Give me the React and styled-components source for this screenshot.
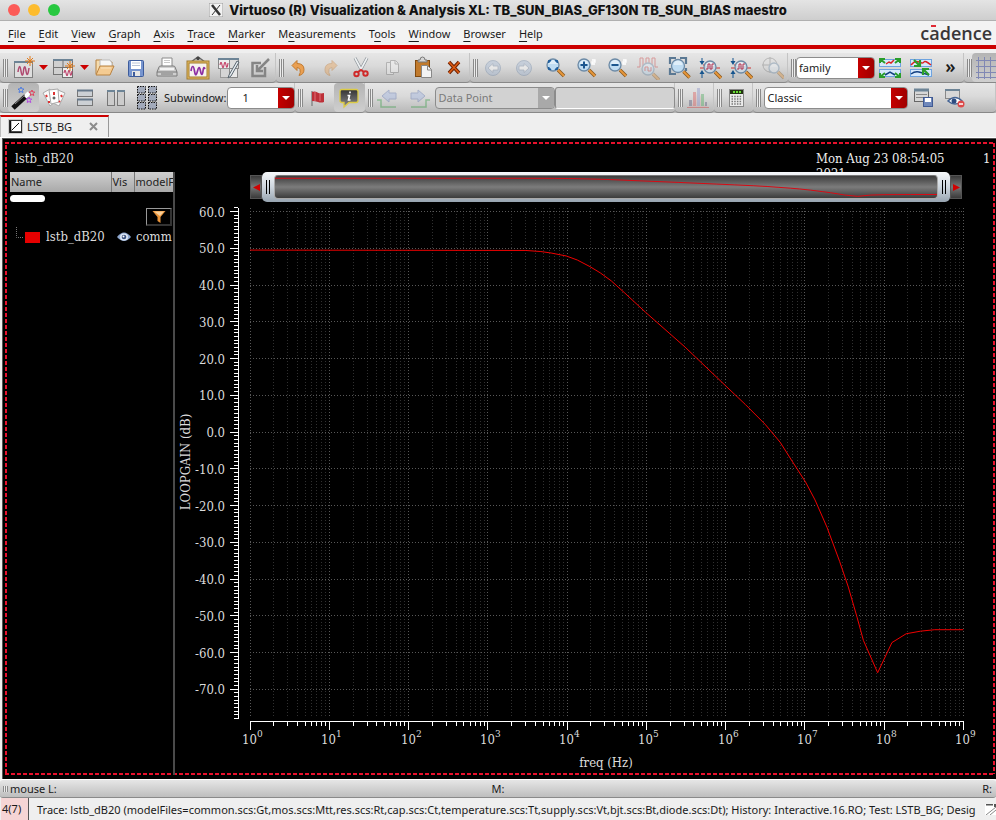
import React from "react";
import styled, { createGlobalStyle, css } from "styled-components";

const UI = `"Noto Sans", "Open Sans", sans-serif`;
const PLOT = `"DejaVu Serif Condensed", "DejaVu Serif", serif`;
const RED = "#cc0000";

const GlobalStyle = createGlobalStyle`
  *, *::before, *::after { box-sizing: border-box; }
  body { margin: 0; background: #efefef; font: 11px/15px ${UI}; color: #1a1a1a; overflow: hidden; }
  button, select, input { font: inherit; color: inherit; margin: 0; padding: 0; border: 0; background: none; }
`;

const Window = styled.div`
  display: flex;
  flex-direction: column;
  min-height: 100vh;
  width: 100%;
  background: #efefef;
`;

const TitleBar = styled.header`
  position: relative;
  display: flex;
  align-items: center;
  justify-content: center;
  gap: 6px;
  height: 21px;
  background: linear-gradient(#e4e4e4, #cecece);
  border-bottom: 1px solid #b0b0b0;
`;

const Title = styled.h1`
  margin: 0;
  font: 800 13px/20px Inter, sans-serif;
  color: #111;
  white-space: nowrap;
`;

const Lights = styled.div`
  position: absolute;
  left: 8px;
  top: 4px;
  display: flex;
  gap: 8px;
`;

const Light = styled.button`
  width: 12px;
  height: 12px;
  border-radius: 50%;
  background: ${(p) => p.$color};
`;

const MenuBar = styled.nav`
  display: flex;
  align-items: center;
  gap: 1px;
  height: 24px;
  padding: 0 4px 0 2px;
  background: #f3f3f3;
`;

const MenuItem = styled.button`
  height: 20px;
  padding: 0 6px;
  white-space: nowrap;
  u { text-underline-offset: 3px; text-decoration-skip-ink: none; }
`;

const Brand = styled.div`
  position: relative;
  margin-left: auto;
  font: 600 18px/22px "Open Sans", sans-serif;
  color: #3a3638;
  &::after {
    content: "";
    position: absolute;
    left: 11px;
    top: 3px;
    width: 5px;
    height: 2px;
    background: #e02b35;
  }
`;

const RedRule = styled.div`
  height: 4px;
  background: ${RED};
`;

const ToolRow = styled.div`
  display: flex;
  height: 30px;
  margin-top: ${(p) => (p.$first ? 4 : 0)}px;
  overflow: hidden;
  background: #b6b6b6;
`;

const Group = styled.div`
  display: flex;
  flex: ${(p) => (p.$grow ? "1 0 auto" : "none")};
  align-items: center;
  height: 30px;
  background: linear-gradient(#e6e6e6, #dadada 45%, #b9b9b9);
  border-bottom: 1px solid #888;
  border-radius: 0 0 4px 4px;
  box-shadow: inset -1px 0 0 #c4c4c4;
`;

const Grip = styled.span`
  flex: none;
  width: 5px;
  height: ${(p) => (p.$small ? 6 : 18)}px;
  margin: 0 0 0 3px;
  background: repeating-linear-gradient(90deg, #8a8a8a 0 1px, #ececec 1px 2px);
`;

const Tool = styled.button`
  display: flex;
  align-items: center;
  justify-content: center;
  flex: none;
  width: ${(p) => p.$w || 31}px;
  height: 29px;
  padding-right: ${(p) => (p.$w ? 0 : 2)}px;
  opacity: ${(p) => (p.disabled ? 0.4 : 1)};
  ${(p) =>
    p.$pressed &&
    css`
      background: linear-gradient(#b4b4b4, #cfcfcf);
      border-radius: 4px;
    `}
`;

const Caption = styled.label`
  padding: 0 1px;
`;

const Combo = styled.span`
  display: grid;
  flex: none;
  width: ${(p) => p.$w}px;
  height: 22px;
  margin-left: ${(p) => p.$lead || 0}px;
  border: 1px solid #8c8c8c;
  border-radius: 4px;
  overflow: hidden;
  background: ${(p) => (p.$off ? "#d2d2d2" : "#fff")};
  color: ${(p) => (p.$off ? "#7a7a7a" : "#222")};
  select, svg { grid-area: 1 / 1; }
  select {
    appearance: none;
    width: 100%;
    padding: 0 18px 0 ${(p) => p.$indent || 2}px;
    opacity: 1;
  }
  svg {
    justify-self: end;
    pointer-events: none;
    background: ${(p) => (p.$off ? "#a9a9a9" : "linear-gradient(90deg, #c40000, #a00000)")};
  }
`;

const Field = styled.input`
  && {
    width: 120px;
    height: 22px;
    border: 1px solid #8c8c8c;
    border-bottom-color: #fff;
    border-radius: 3px;
    background: #d2d2d2;
  }
`;

const Chevron = styled.span`
  font: 600 18px/18px ${UI};
  padding-bottom: 4px;
`;

const TabStrip = styled.div`
  display: flex;
  height: 25px;
  padding-top: 2px;
  border-bottom: 1px solid #fff;
`;

const Tab = styled.div`
  display: flex;
  align-items: center;
  width: 109px;
  padding: 0 10px 2px 7px;
  gap: 4px;
  border-top: 2px solid ${RED};
  border-right: 1px solid #999;
  border-left: 1px solid #bbb;
`;

const TabPicture = styled.span`
  display: flex;
  padding: 1px;
  background: #ccc;
`;

const CloseTab = styled.button`
  display: flex;
  margin-left: auto;
`;

const dashX = "repeating-linear-gradient(90deg, #e8112d 0 4px, transparent 4px 6px)";
const dashY = "repeating-linear-gradient(#e8112d 0 4px, transparent 4px 6px)";

const Canvas = styled.main`
  display: flex;
  flex-direction: column;
  flex: 1;
  margin-left: 2px;
  padding: 4px 4px 4px 7px;
  border-top: 1px solid #555;
  border-left: 1px solid #555;
  background:
    ${dashX} 2px 3px / calc(100% - 3px) 2px no-repeat,
    ${dashX} 2px calc(100% - 4px) / calc(100% - 3px) 2px no-repeat,
    ${dashY} 2px 6px / 2px calc(100% - 12px) no-repeat,
    ${dashY} calc(100% - 1px) 4px / 2px calc(100% - 9px) no-repeat,
    #000;
  color: #dcdcdc;
  font: 13px/16px ${PLOT};
`;

const GraphHeader = styled.div`
  display: flex;
  justify-content: space-between;
  height: 29px;
  padding: 8px 0 0 5px;
`;

const Stamp = styled.div`
  display: flex;
  height: 21px;
  overflow: hidden;
  color: #eee;
  time { width: 140px; line-height: 15px; }
  span { width: 9px; margin-left: 27px; }
`;

const Body = styled.div`
  display: flex;
  flex: 1;
`;

const Side = styled.aside`
  flex: none;
  width: 165px;
  overflow: hidden;
  border-right: 2px solid #4a4a4a;
`;

const Tree = styled.table`
  width: 163px;
  table-layout: fixed;
  border-collapse: collapse;
  white-space: nowrap;
  th, td { padding: 0; overflow: hidden; text-align: left; font-weight: normal; vertical-align: middle; }
  th {
    height: 20px;
    padding: 0 0 1px 1px;
    font: 11px/15px ${UI};
    color: #222;
    background: linear-gradient(#cfcfcf, #a9a9a9);
  }
  th + th { border-left: 1px solid #777; }
  td { height: 20px; }
  td:last-child { padding-left: ${(p) => p.$inset}px; }
  td[colspan] { padding-left: 0; }
`;

const Progress = styled.div`
  width: 35px;
  height: 7px;
  margin-top: 3px;
  border-radius: 4px;
  background: #fff;
`;

const FilterButton = styled.button`
  display: flex;
  align-items: center;
  justify-content: center;
  width: 26px;
  height: 18px;
  margin: 6px 1px 1px auto;
  border: 1px solid #999;
  border-right: 2px solid #333;
  border-bottom: 2px solid #333;
`;

const TraceName = styled.span`
  display: flex;
  align-items: center;
  gap: 6px;
`;

const Visible = styled.span`
  display: flex;
  padding-left: 6px;
`;

const PlotArea = styled.section`
  display: flex;
  flex: 1;
  flex-direction: column;
  min-width: 0;
  padding-left: 1px;
`;

const Zoomer = styled.div`
  display: flex;
  align-items: center;
  height: 30px;
  margin: 0 30px 3px 74px;
`;

const ZoomEnd = styled.button`
  display: flex;
  align-items: center;
  justify-content: center;
  width: 12px;
  height: 24px;
  border: 1px solid #555;
  background: linear-gradient(#3a3a3a, #777, #3a3a3a);
`;

const ZoomRange = styled.div`
  display: flex;
  flex: 1;
  align-items: center;
  height: 30px;
  padding: 3px 0;
  border-radius: 5px;
  background: linear-gradient(#f7f9fb, #ced6de 50%, #97a4b0);
`;

const ZoomHandle = styled.button`
  display: flex;
  align-items: center;
  justify-content: center;
  width: 12px;
  height: 24px;
  &::before {
    content: "";
    width: 4px;
    height: 14px;
    border: solid #000;
    border-width: 0 1px;
  }
`;

const ZoomTrack = styled.div`
  flex: 1;
  height: 24px;
  border: 1px solid #aaa;
  border-top-color: #777;
  border-radius: 4px;
  background: linear-gradient(#3c3c3c, #7c7c7c 50%, #3c3c3c);
  svg { display: block; width: 100%; height: 22px; }
`;

const Chart = styled.svg`
  display: block;
  width: 100%;
  font: 13px ${PLOT};
  fill: #dcdcdc;
`;

const MouseBar = styled.div`
  display: grid;
  grid-template-columns: 1fr auto 1fr;
  align-items: center;
  height: 19px;
  border-top: 1px solid #fff;
  border-bottom: 1px solid #8a8a8a;
  border-radius: 3px;
  background: linear-gradient(#e6e6e6, #bebebe);
  span:first-child { display: flex; align-items: center; gap: 2px; }
  span:last-child { justify-self: end; padding-right: 4px; }
`;

const StatusBar = styled.footer`
  display: flex;
  align-items: center;
  height: 22px;
  white-space: nowrap;
`;

const Badge = styled.span`
  align-self: stretch;
  width: 28px;
  margin-left: 1px;
  padding-left: 1px;
  line-height: 22px;
  background: #f6d5d5;
  border-right: 1px solid #555;
`;

const StatusText = styled.span`
  flex: 1;
  padding-left: 8px;
  overflow: hidden;
`;

const Svg = ({ s = 24, children, ...rest }) => (
  <svg width={s} height={s} viewBox={`0 0 ${s} ${s}`} fill="none" aria-hidden="true" {...rest}>
    {children}
  </svg>
);

const Drop = ({ fill = RED }) => (
  <svg width="9" height="5" viewBox="0 0 9 5" aria-hidden="true"><path d="M0 0h9L4.500 5z" fill={fill} /></svg>
);

const Lens = ({ x = 10, y = 9, r = 6, tint = "#bfdcf2" }) => (
  <g>
    <path d={`M${x + r - 1} ${y + r - 1}l6 6`} stroke="#8a5a20" strokeWidth="3.500" />
    <path d={`M${x + r - 1} ${y + r - 1}l6 6`} stroke="#e8973a" strokeWidth="1.800" />
    <circle cx={x} cy={y} r={r} fill={tint} stroke="#6c8aa6" strokeWidth="1.300" />
    <path d={`M${x - r + 2} ${y - 1}a${r - 2} ${r - 2} 0 0 1 ${2 * r - 4} 0`} fill="#fff" opacity=".5" />
  </g>
);

const Spark = ({ x, y, c = "#e07b1a" }) => (
  <path d={`M${x} ${y - 5}v10M${x - 5} ${y}h10M${x - 3} ${y - 3}l6 6M${x - 3} ${y + 3}l6-6`} stroke={c} strokeWidth="1" />
);

const NewPlot = () => (
  <Svg>
    <rect x="3.500" y="5.500" width="18" height="16" fill="#dedede" stroke="#808080" />
    <path d="M3 6h19" stroke="#6d8496" strokeWidth="2" />
    <path d="M7 16c1-7 2-7 3-1s2 5 2.500 0 1.500-6 2.500 0 2 4 3-3" stroke="#b04a70" strokeWidth="1.500" />
    <Spark x={19} y={5} />
  </Svg>
);
const NewSub = () => (
  <Svg>
    <rect x="1.500" y="3.500" width="19" height="15" fill="#d0d0d0" stroke="#757575" />
    <path d="M1 4h20" stroke="#6d8496" strokeWidth="2" />
    <path d="M11 4v14M1 11.500h20" stroke="#757575" />
    <rect x="10.500" y="11.500" width="10" height="10" fill="#eee" stroke="#707070" />
    <path d="M12 17q1-6 2 0t2 0t2 0t2-2" stroke="#b8325e" />
    <Spark x={18} y={10} />
  </Svg>
);
const Folder = () => (
  <Svg>
    <path d="M3 18V4h6l2 2h8v4" fill="#f5dcae" stroke="#b5803f" />
    <path d="M7 4h10l2 3v5H7z" fill="#f7f7f7" stroke="#bbb" />
    <path d="M3 19 7 10h14l-4 9z" fill="#f4cb92" stroke="#b98241" />
    <path d="M8 12h10" stroke="#fbe2bd" />
  </Svg>
);
const Save = () => (
  <Svg>
    <rect x="4.500" y="4.500" width="15" height="16" rx="1" fill="#7795cf" stroke="#3d5c9c" />
    <rect x="7" y="5" width="10" height="8" fill="#fff" />
    <path d="M8 7h8M8 9.500h8" stroke="#b9c4d8" />
    <rect x="8" y="15" width="8" height="5" fill="#e6e6e6" /><rect x="9" y="16" width="2" height="4" fill="#3d5c9c" />
  </Svg>
);
const Print = () => (
  <Svg>
    <path d="M7 10V2h10v8" fill="#fff" stroke="#8a8a8a" />
    <path d="M4 11q0-1 2-1h12q2 0 2 1l2 5v4H2v-4z" fill="#cfcfcf" stroke="#7b7b7b" />
    <path d="M2 16h20M6 18h12" stroke="#777" /><path d="M5 13h14" stroke="#f4f4f4" strokeWidth="2" />
    <path d="M9 4.500h6M9 6.500h6" stroke="#c9c9c9" />
  </Svg>
);
const Picture = () => (
  <Svg>
    <path d="M5 6 12 1l7 5" stroke="#666" strokeWidth="1.500" /><circle cx="12" cy="2.500" r="1.800" fill="#444" />
    <rect x="2" y="6" width="20" height="16" fill="#f7f3ee" stroke="#a07a30" strokeWidth="3" />
    <rect x="2" y="6" width="20" height="16" stroke="#e5bd63" />
    <path d="M5 15c1-6 2.500-6 3.500 0s2 4 3 0 2-5 3 0 2 4 2.500 0 1-4 2-2" stroke="#8d2fa3" strokeWidth="1.700" />
  </Svg>
);
const EditPlot = () => (
  <Svg>
    <rect x="1.500" y="2.500" width="11" height="10" fill="#eee" stroke="#888" />
    <rect x="12.500" y="2.500" width="9" height="10" fill="#dedede" stroke="#888" />
    <rect x="3.500" y="12.500" width="9" height="9" fill="#d5d5d5" stroke="#999" />
    <rect x="12.500" y="12.500" width="8" height="9" fill="#e9e9e9" stroke="#888" />
    <path d="M1 3h21" stroke="#6d8496" strokeWidth="2" />
    <path d="M3 9q1-6 2 0t2 0t2 0t2-2" stroke="#c0305a" />
    <path d="m20 5-8 14-1 3 3-2 8-14z" fill="#e8eef2" stroke="#5a6670" />
  </Svg>
);
const Import = () => (
  <Svg>
    <path d="M13 7H4.500v13H17v-9" stroke="#858585" strokeWidth="2.500" />
    <path d="M21 3 10 14M9 9v6h6" stroke="#858585" strokeWidth="2.500" />
  </Svg>
);
const Undo = ({ flip }) => (
  <Svg>
    <path transform={flip ? "translate(24 0) scale(-1 1)" : undefined} d="M5 9.500 10 4.500v3q7 0 7 6 0 5-5 6 2-3 1-6-1-2-3-2v3z" fill="#eaa052" stroke="#c27a30" />
  </Svg>
);
const Cut = () => (
  <Svg>
    <path d="m6 2 7 13M18 2l-7 13" stroke="#8d9499" strokeWidth="3" /><path d="m6 2 7 13M18 2l-7 13" stroke="#eef1f3" strokeWidth="1.600" />
    <circle cx="7.500" cy="18" r="2.200" stroke="#cf2a2a" strokeWidth="2" /><circle cx="16.500" cy="17.500" r="2.200" stroke="#cf2a2a" strokeWidth="2" />
    <path d="m9 16 3-2 3 2" stroke="#cf2a2a" strokeWidth="2" />
  </Svg>
);
const Copy = () => (
  <Svg>
    <path d="M6.500 6.500h7v12h-7z" fill="#eee" stroke="#777" /><path d="M10.500 4.500h5l3 3v9h-8z" fill="#fafafa" stroke="#777" /><path d="M15 5v3h3" stroke="#777" />
  </Svg>
);
const Paste = () => (
  <Svg>
    <rect x="4.500" y="4.500" width="14" height="16" fill="#c17a2c" stroke="#80490f" /><path d="M7 6h9V4h-2q0-3-2.500-3T9 4H7z" fill="#d5d5d5" stroke="#777" />
    <path d="M10.500 9.500h6l4 4v8h-10z" fill="#f3f3f3" stroke="#888" /><path d="M16.500 10v4h4" stroke="#888" />
  </Svg>
);
const Delete = () => (
  <Svg><path d="m7 6 10 11M17 6 7 17" stroke="#6e2305" strokeWidth="3.500" /><path d="m7 6 10 11M17 6 7 17" stroke="#dd5a12" strokeWidth="1.600" /></Svg>
);
const Nav = ({ flip }) => (
  <Svg>
    <g transform={flip ? "translate(24 0) scale(-1 1)" : undefined}>
      <circle cx="12" cy="12" r="7.500" fill="#a4b9d6" stroke="#6f87a8" />
      <path d="m7 12 5-4.500V10h5v4h-5v2.500z" fill="#fff" stroke="#6a7f9d" strokeWidth=".8" />
    </g>
  </Svg>
);
const Fit = () => <Svg><Lens /><path d="M5.500 7V4.500H8zM14.500 7V4.500H12zM5.500 11v2.500H8zM14.500 11v2.500H12z" fill="#1f5e9c" stroke="#1f5e9c" /></Svg>;
const ZoomBy = ({ plus }) => (
  <Svg>
    <Lens /><path d={plus ? "M6.500 9h7M10 5.500v7" : "M6.500 9h7"} stroke="#1b568f" strokeWidth="2" />
    <path d="M18 4h3v2h-3v2h3" stroke="#fff" strokeWidth="1.300" />
  </Svg>
);
const ZoomWave = () => (
  <Svg>
    <path d="M1 11h3V2h3v9h3V2h3v9h3V2h3v9h3" stroke="#c33" /><Lens x={12} y={13} r={6} /><path d="M9 15v-4h3v4h3v-4" stroke="#c33" />
  </Svg>
);
const ZoomBox = () => (
  <Svg>
    <path d="M3 8V2h6M13 2h6v6M3 12v6h6M19 12v3" stroke="#5a7893" strokeWidth="2.200" /><Lens x={11} y={10} r={6.500} />
  </Svg>
);
const ZoomY = () => (
  <Svg>
    <path d="M2 12h4M18 12h4M5 9h13" stroke="#c33" />
    <path d="M4 2v5M4 16v6" stroke="#15548e" /><path d="M1.500 5h5L4 9zM1.500 18h5L4 14z" fill="#15548e" />
    <Lens x={12} y={11} r={6} tint="#ccd7e2" /><path d="M8 13h2V8h2v5h2V8h2" stroke="#b3304c" />
  </Svg>
);
const ZoomPolar = () => <Svg><circle cx="10" cy="9" r="7" stroke="#777" /><path d="M10 1v16M2 9h16" stroke="#777" /><Lens x={14} y={12} r={5} tint="#dfe7ee" /></Svg>;
const FitBox = ({ inward }) => (
  <Svg>
    <rect x="1.500" y="3.500" width="21" height="7" fill="#d6e9fb" stroke="#6ea3e0" /><rect x="1.500" y="13.500" width="21" height="7" fill="#d6e9fb" stroke="#6ea3e0" />
    <path d={inward ? "M2 9q4-5 8-3t5 0t7 3" : "m8 8 3-2 2 1 3-3"} stroke="#d22" strokeWidth="1.500" />
    <path d={inward ? "M2 18q4-3 8-2t10 3" : "m7 19 5-3 5 3"} stroke="#123f80" strokeWidth="1.500" />
    {inward ? (
      <path d="m5 4 5 5M11 4v6H5M20 19l-5-5M14 19v-6h6" stroke="#2a9d2a" strokeWidth="2.200" />
    ) : (
      <path d="M7 7 2 3M2 7V3h5M17 7l5-4M17 3h5v4M7 17l-5 4M2 17v4h5M17 17l5 4M17 21h5v-4" stroke="#2a9d2a" strokeWidth="2" />
    )}
  </Svg>
);
const GridIcon = () => (
  <Svg><path d="M3.500 1v22M9.500 1v22M15.500 1v22M21.500 1v22M1 4.500h22M1 10.500h22M1 16.500h22M1 21.500h22" stroke="#8088b4" /></Svg>
);
const Wand = () => (
  <Svg>
    <path d="m2 22 13-12" stroke="#111" strokeWidth="5" /><path d="m14 11 4-4" stroke="#fff" strokeWidth="4" /><path d="m4 18 10-9" stroke="#888" />
    <path d="m10 1 1 2h2l-1.500 1.500.5 2L10 5.500 8 6.500l.5-2L7 3h2z" stroke="#4c7be0" />
    <path d="m21 4 .8 2h2l-1.500 1.500.5 2-1.800-1-1.800 1 .5-2L18 6h2z" stroke="#e0405c" />
    <path d="m18 11 .8 2h2l-1.500 1.500.5 2-1.800-1-1.800 1 .5-2L15 13h2z" stroke="#b44be0" />
  </Svg>
);
const Cards = () => (
  <Svg>
    <path d="m1 7 7-4 5 13-5 4z" fill="#fafafa" stroke="#aaa" /><path d="m16 4 7 3-6 13-6-3z" fill="#fafafa" stroke="#aaa" />
    <path d="m7 4 9-1 1 13-8 2z" fill="#fff" stroke="#aaa" />
    <path d="m4 9 1 2M12 6v3M19 9l1 2M17 15l1 1M7 15v2" stroke="#d33" strokeWidth="2" /><path d="M10.500 12h3M12 10.500v3" stroke="#333" />
  </Svg>
);
const Rows = () => (
  <Svg><rect x="4.500" y="4.500" width="15" height="6" fill="#ccd0d4" stroke="#777" /><rect x="4.500" y="13.500" width="15" height="6" fill="#ccd0d4" stroke="#777" /><path d="M4 4.500h16M4 13.500h16" stroke="#66788a" strokeWidth="2" /></Svg>
);
const Cols = () => (
  <Svg><rect x="3.500" y="4.500" width="7" height="15" fill="#ccc" stroke="#777" /><rect x="13.500" y="4.500" width="7" height="15" fill="#ccc" stroke="#777" /><path d="M3 5h8M13 5h8" stroke="#6d8496" strokeWidth="2" /></Svg>
);
const GridSix = () => (
  <Svg>
    {[1, 9, 17].map((y) => [2, 13].map((x) => <rect key={`${x}-${y}`} x={x + 0.5} y={y - 0.5} width="8" height="6.500" fill="#a2aabb" stroke="#111" strokeDasharray="1.500 1" />))}
  </Svg>
);
const Flag = () => (
  <Svg><path d="M6 5v15" stroke="#888" strokeWidth="1.500" /><path d="M6 6q3-1 5.500.5t6.500.5v9q-3 1-6 0T6 15z" fill="#bd3038" /><path d="M9 6v9M14 7v8" stroke="#e07078" /></Svg>
);
const Info = () => (
  <Svg>
    <path d="M5 3.500h14q2 0 2 2v9q0 2-2 2h-7L7 21v-4.500H5q-2 0-2-2v-9q0-2 2-2z" fill="url(#bubble)" stroke="#dccb45" strokeWidth="1.300" />
    <defs><linearGradient id="bubble" x2="0" y2="1"><stop stopColor="#333" /><stop offset="1" stopColor="#8a8a8a" /></linearGradient></defs>
    <path d="M13 5.500v1.800M10.500 9.500h2l-1 4.500h2" stroke="#fff" strokeWidth="1.600" />
  </Svg>
);
const Step = ({ flip }) => (
  <Svg>
    <g transform={flip ? "translate(24 0) scale(-1 1)" : undefined}>
      <path d="M1 14h4v7h15" stroke="#2d9a3c" strokeWidth="1.500" /><path d="m6 10 7-6v3h7v6h-7v3z" fill="#9db2e2" stroke="#5a70ad" />
    </g>
  </Svg>
);
const Histogram = () => (
  <Svg><path d="M2 21q5-2 7-8t3-10q2 5 4 11t6 7z" fill="#e79a9a" opacity=".6" /><path d="M4.500 14v6" stroke="#557" strokeWidth="3" /><path d="M8.500 6v14" stroke="#d55" strokeWidth="3" /><path d="M12.500 2v18" stroke="#8890c8" strokeWidth="3" /><path d="M16.500 8v12" stroke="#4aaa5a" strokeWidth="3" /><path d="M20 16v4" stroke="#557" strokeWidth="2" /><path d="M1 21.500h22" stroke="#c33" /></Svg>
);
const Calc = () => (
  <Svg>
    <rect x="4.500" y="3.500" width="14" height="17" fill="#ececec" stroke="#888" /><rect x="5" y="4" width="13" height="4" fill="#231" /><path d="M8 6h8" stroke="#6d3" strokeWidth="2" strokeDasharray="2 1" />
    <path d="M6.500 10.500h10M6.500 13h10M6.500 15.500h10M6.500 18h10" stroke="#777" strokeWidth="1.500" strokeDasharray="1.500 1.200" />
  </Svg>
);
const SavePanel = () => (
  <Svg>
    <rect x="3.500" y="3.500" width="14" height="12" fill="#d7d7d7" stroke="#666" /><path d="M3 4h15" stroke="#6d8496" strokeWidth="3" /><path d="M5 8.500h11M5 11.500h8" stroke="#888" />
    <rect x="12.500" y="11.500" width="9" height="9" fill="#6f88bb" stroke="#405a94" /><rect x="14" y="12" width="6" height="4" fill="#fff" />
  </Svg>
);
const HidePanel = () => (
  <Svg>
    <rect x="3.500" y="3.500" width="14" height="9" fill="#d7d7d7" stroke="#888" /><path d="M3 4h15" stroke="#6d8496" strokeWidth="2" />
    <path d="M6 15q7-7 14 0-7 6-14 0z" fill="#fff" stroke="#456494" strokeWidth="1.500" /><circle cx="12" cy="15" r="2.500" fill="#2d4b80" />
    <circle cx="19" cy="18" r="3.500" fill="#dd4a4a" /><path d="M17 18h4" stroke="#fff" strokeWidth="1.500" />
  </Svg>
);
const XLogo = () => (
  <Svg s={14}><rect width="14" height="14" fill="#f2f2f2" stroke="#999" /><path d="m3 2 8 10" stroke="#333" strokeWidth="2.500" /><path d="m11 2-8 10" stroke="#333" /></Svg>
);
const TabIcon = () => (
  <Svg s={13}><rect x=".5" y=".5" width="12" height="12" fill="#fff" stroke="#333" /><path d="M2.500 10.500 10 3" stroke="#111" /><path d="M1 12h11M1.500 1v11" stroke="#111" strokeWidth="1.500" /></Svg>
);
const Eye = () => (
  <Svg s={14}><path d="M0 7q7-9 14 0-7 8-14 0z" fill="#8fa8cf" /><ellipse cx="7" cy="7" rx="4" ry="3.500" fill="#dfe8f5" /><circle cx="7" cy="7" r="2.300" fill="#39517f" /><circle cx="6.500" cy="6.500" r="1" fill="#fff" /></Svg>
);
const Funnel = () => (
  <Svg s={14}><path d="M.5 1h13L8.500 7v6l-3-2V7z" fill="#eb9439" /><path d="M2 1.500h10L8 6z" fill="#f8cf9a" /></Svg>
);

const menus = [
  ["", "F", "ile"], ["", "E", "dit"], ["", "V", "iew"], ["", "G", "raph"], ["", "A", "xis"], ["", "T", "race"], ["", "M", "arker"],
  ["M", "e", "asurements"], ["T", "o", "ols"], ["", "W", "indow"], ["", "B", "rowser"], ["", "H", "elp"],
];

const Combobox = ({ label, value, ...p }) => (
  <Combo {...p}>
    <select aria-label={label} id={label.toLowerCase()} disabled={p.$off} defaultValue={value}><option>{value}</option></select>
    <svg width="16" height="20" viewBox="0 0 16 20" aria-hidden="true"><path d="M4 8h8l-4 4z" fill="#fff" /></svg>
  </Combo>
);

const loopGain = [
  [0, 49.5], [3.48, 49.4], [3.67, 49.1], [3.8, 48.7], [3.99, 47.9], [4.13, 46.8], [4.29, 45], [4.42, 43.3], [4.56, 41.1], [4.73, 37.8],
  [4.99, 32.6], [5.49, 23.1], [6, 12.6], [6.25, 7.5], [6.5, 2.1], [6.69, -2.8], [6.84, -7.9], [7.01, -13.6], [7.13, -18.5], [7.28, -25.9],
  [7.44, -35.2], [7.55, -42.2], [7.66, -50.4], [7.74, -56.7], [7.92, -65.5], [8.1, -57.3], [8.28, -54.9], [8.46, -54.2], [8.64, -53.8], [9, -53.8],
];

const snap = (v) => Math.floor(v) + 0.5;
const px = (decade) => 74 + decade * 79.25;
const py = (db) => 6.5 + (60 - db) * 3.675;
const decades = Array.from({ length: 10 }, (_, i) => i);
const minors = decades.slice(0, 9).flatMap((d) => [2, 3, 4, 5, 6, 7, 8, 9].map((m) => d + Math.log10(m)));
const levels = Array.from({ length: 14 }, (_, i) => 60 - i * 10);
const yMinors = Array.from({ length: 140 }, (_, i) => 61 - i);

const LoopGainChart = () => (
  <Chart viewBox="0 0 816 566" role="img" aria-label="Loop gain in dB against frequency">
    <g stroke="#303030" strokeDasharray="1 2">
      {minors.map((m) => <path key={m} d={`M${snap(px(m))} 3V511`} />)}
    </g>
    <g stroke="#585858" strokeDasharray="1 2">
      {decades.map((d) => <path key={d} d={`M${snap(px(d))} 3V511`} />)}
      {levels.map((v) => <path key={v} d={`M74 ${snap(py(v))}H788`} />)}
    </g>
    <g stroke="#fff" shapeRendering="crispEdges">
      <path d="M62.500 3V514M74 516.500H788" />
      {yMinors.map((v) => <path key={v} d={`M58 ${snap(py(v))}h4`} />)}
      {levels.map((v) => <path key={v} d={`M54 ${snap(py(v))}h8`} />)}
      {minors.map((m) => <path key={m} d={`M${snap(px(m))} 517v4`} />)}
      {decades.map((d) => <path key={d} d={`M${snap(px(d))} 517v8`} />)}
    </g>
    <polyline points={loopGain.map(([f, g]) => `${px(f)},${py(g)}`).join(" ")} fill="none" stroke="#f00000" />
    {levels.map((v) => <text key={v} x="49" y={Math.round(py(v)) + 5} textAnchor="end">{v.toFixed(1)}</text>)}
    {decades.map((d) => (
      <text key={d} x={Math.round(px(d)) - 8} y="539">10<tspan dy="-7" fontSize="10">{d}</tspan></text>
    ))}
    <text x="430" y="562" textAnchor="middle">freq (Hz)</text>
    <text transform="translate(14 257) rotate(-90)" textAnchor="middle">LOOPGAIN (dB)</text>
  </Chart>
);

const tools = (list) => list.map(([label, icon, extra]) => <Tool key={label} title={label} aria-label={label} {...extra}>{icon}</Tool>);
const off = { disabled: true };

export default function App() {
  return (
    <Window>
      <GlobalStyle />
      <TitleBar>
        <Lights>
          <Light $color="#fc5b57" aria-label="Close" />
          <Light $color="#fdbc2e" aria-label="Minimize" />
          <Light $color="#28c840" aria-label="Zoom window" />
        </Lights>
        <XLogo />
        <Title>Virtuoso (R) Visualization &amp; Analysis XL: TB_SUN_BIAS_GF130N TB_SUN_BIAS maestro</Title>
      </TitleBar>
      <MenuBar>
        {menus.map(([a, key, b]) => <MenuItem key={a + key + b}>{a}<u>{key}</u>{b}</MenuItem>)}
        <Brand>cadence</Brand>
      </MenuBar>
      <RedRule />

      <ToolRow $first>
        <Group>
          <Grip />
          {tools([
            ["New window", <NewPlot />, { $w: 29 }], ["New window options", <Drop />, { $w: 12 }],
            ["New subwindow", <NewSub />, { $w: 29 }], ["New subwindow options", <Drop />, { $w: 12 }],
            ["Open", <Folder />], ["Save", <Save />], ["Print", <Print />], ["Save image", <Picture />], ["Edit graph", <EditPlot />], ["Import", <Import />],
          ])}
        </Group>
        <Group>
          <Grip />
          {tools([["Undo", <Undo />], ["Redo", <Undo flip />, off], ["Cut", <Cut />], ["Copy", <Copy />, off], ["Paste", <Paste />], ["Delete", <Delete />]])}
        </Group>
        <Group>
          <Grip />
          {tools([
            ["Previous view", <Nav />, off], ["Next view", <Nav flip />, off], ["Fit", <Fit />], ["Zoom in by 2", <ZoomBy plus />], ["Zoom out by 2", <ZoomBy />],
            ["Zoom waveform", <ZoomWave />, off], ["Zoom area", <ZoomBox />], ["Zoom Y", <ZoomY />], ["Zoom X", <ZoomY />], ["Zoom polar", <ZoomPolar />, off],
          ])}
        </Group>
        <Group>
          <Grip />
          <Combobox label="Grouping" value="family" $w={79} />
          {tools([["Expand strips", <FitBox />], ["Combine strips", <FitBox inward />]])}
          <Tool $w={27} aria-label="More tools"><Chevron>»</Chevron></Tool>
        </Group>
        <Group $grow>
          <Grip />
          <Tool $pressed aria-label="Grid"><GridIcon /></Tool>
        </Group>
      </ToolRow>

      <ToolRow>
        <Group>
          <Grip />
          {tools([["Assistant", <Wand />, { $pressed: true }], ["Card layout", <Cards />], ["Horizontal layout", <Rows />], ["Vertical layout", <Cols />], ["Grid layout", <GridSix />]])}
          <Caption htmlFor="subwindow">Subwindow:</Caption>
          <Combobox label="Subwindow" value="1" $w={68} $indent={14} />
        </Group>
        <Group>
          <Grip />
          {tools([["Flag", <Flag />], ["Tooltips", <Info />, { $pressed: true }]])}
        </Group>
        <Group>
          <Grip />
          {tools([["Previous edge", <Step />, off], ["Next edge", <Step flip />, off]])}
          <Combobox label="Step" value="Data Point" $w={120} $off />
          <Field disabled aria-label="Step value" />
        </Group>
        <Group>
          <Grip />
          {tools([["Histogram", <Histogram />, off]])}
        </Group>
        <Group>
          <Grip />
          {tools([["Calculator", <Calc />]])}
        </Group>
        <Group $grow>
          <Grip />
          <Combobox label="Workspace" value="Classic" $w={144} $lead={3} />
          {tools([["Save workspace", <SavePanel />], ["Hide workspace", <HidePanel />]])}
        </Group>
      </ToolRow>

      <TabStrip>
        <Tab>
          <TabPicture><TabIcon /></TabPicture>
          LSTB_BG
          <CloseTab aria-label="Close tab">
            <Svg s={9}><path d="m1 1 7 7M8 1 1 8" stroke="#8c8c8c" strokeWidth="2" /></Svg>
          </CloseTab>
        </Tab>
      </TabStrip>

      <Canvas>
        <GraphHeader>
          <span>lstb_dB20</span>
          <Stamp><time>Mon Aug 23 08:54:05 2021</time><span>1</span></Stamp>
        </GraphHeader>
        <Body>
          <Side>
            <Tree $inset={2}>
              <colgroup><col width="101" /><col width="23" /><col /></colgroup>
              <thead><tr><th>Name</th><th>Vis</th><th>modelF</th></tr></thead>
              <tbody>
                <tr><td colSpan="3"><Progress /><FilterButton aria-label="Filter"><Funnel /></FilterButton></td></tr>
                <tr>
                  <td>
                    <TraceName>
                      <svg width="30" height="20" viewBox="0 0 30 20" aria-hidden="true">
                        <path d="M6.500 0v10.500H13" fill="none" stroke="#777" strokeDasharray="1 1" /><rect x="15" y="5" width="15" height="11" fill="#e60000" />
                      </svg>
                      lstb_dB20
                    </TraceName>
                  </td>
                  <td><Visible><Eye /></Visible></td>
                  <td>comm</td>
                </tr>
              </tbody>
            </Tree>
          </Side>
          <PlotArea>
            <Zoomer>
              <ZoomEnd aria-label="Scroll left"><Svg s={7}><path d="M7 0v7L0 3.500z" fill="#d00000" /></Svg></ZoomEnd>
              <ZoomRange>
                <ZoomHandle aria-label="Range start" />
                <ZoomTrack>
                  <svg viewBox="0 0 9 140" preserveAspectRatio="none" aria-hidden="true">
                    <polyline points={loopGain.map(([f, g]) => `${f},${64 - g}`).join(" ")} fill="none" stroke="#d80a14" vectorEffect="non-scaling-stroke" />
                  </svg>
                </ZoomTrack>
                <ZoomHandle aria-label="Range end" />
              </ZoomRange>
              <ZoomEnd aria-label="Scroll right"><Svg s={7}><path d="M0 0v7l7-3.500z" fill="#d00000" /></Svg></ZoomEnd>
            </Zoomer>
            <LoopGainChart />
          </PlotArea>
        </Body>
      </Canvas>

      <MouseBar>
        <span><Grip $small />mouse L:</span>
        <span>M:</span>
        <span>R:</span>
      </MouseBar>
      <StatusBar>
        <Badge>4(7)</Badge>
        <StatusText>
          Trace: lstb_dB20 (modelFiles=common.scs:Gt,mos.scs:Mtt,res.scs:Rt,cap.scs:Ct,temperature.scs:Tt,supply.scs:Vt,bjt.scs:Bt,diode.scs:Dt); History: Interactive.16.RO; Test: LSTB_BG; Desig
        </StatusText>
        <Svg s={11}><rect width="11" height="11" fill="#fff" /><path d="M1 .500h7M10 0v3" stroke="#555" strokeWidth="2" /><path d="m1 11 10-8M5 11l6-5" stroke="#888" /></Svg>
      </StatusBar>
    </Window>
  );
}
